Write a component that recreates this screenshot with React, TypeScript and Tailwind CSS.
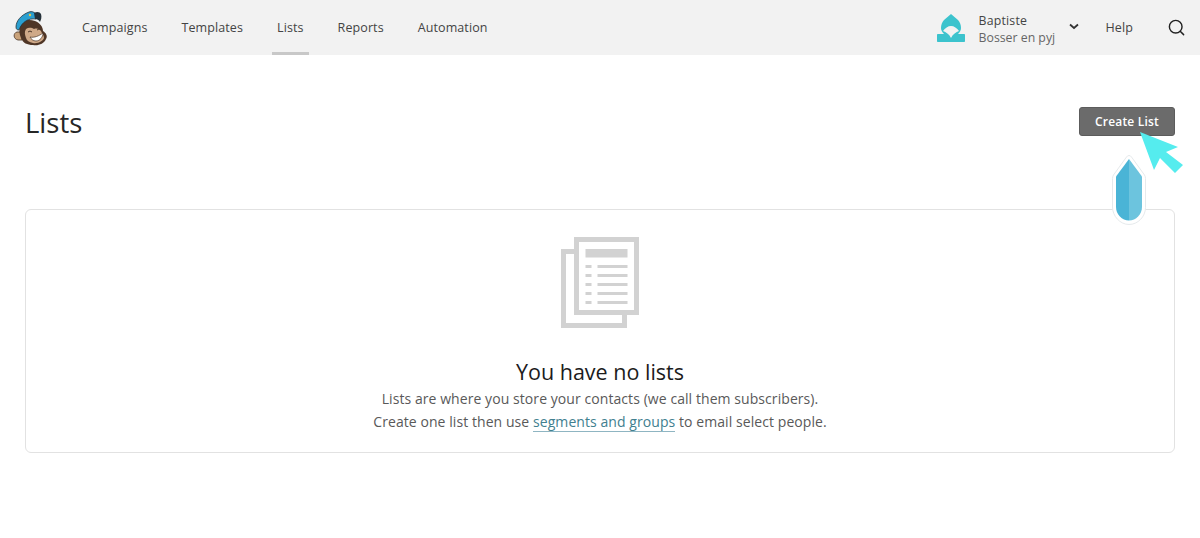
import { Search } from "lucide-react"

const navItems = ["Campaigns", "Templates", "Lists", "Reports", "Automation"]

function Logo() {
  return (
    <svg width="36" height="36" viewBox="0 0 36 36" className="shrink-0">
      <path d="M4 22c-4 1-4 7 1 8l4 0 0-8z" fill="#c9a27a" stroke="#4a3527" strokeWidth="0.8" />
      <path d="M7 15c2-5 9-6 15-4 5 2 8 6 8 10 3 2 5 5 3 8-2 5-8 7-13 6-6 0-10-2-12-7-2-4-2-9-1-13z" fill="#4f3626" />
      <path d="M13 19c3-2 6-1 8 0 3-1 6 0 7 2 1 3 3 4 3 7-1 3-6 6-11 5-4-1-6-2-7-5-1-3-2-6 0-9z" fill="#cfa988" />
      <path d="M17 27c4 1 9-1 13-4 0 4-3 8-7 8-3 0-5-2-6-4z" fill="#ffffff" stroke="#4a3527" strokeWidth="0.7" />
      <path d="M15 22q2-2 4 0M24 20q2-2 4 0" fill="none" stroke="#4a3527" strokeWidth="1" />
      <path d="M3 17C3 11 8 5 16 2c3-1 5 0 7 2l0 5C15 8 9 12 6 20 4 20 3 19 3 17z" fill="#2a9fd0" stroke="#26323a" strokeWidth="0.8" />
      <path d="M21 3c3-2 6-1 7 1 1 3 0 6-1 8-1-2-3-3-5-3z" fill="#26323a" />
      <circle cx="17" cy="5" r="1.2" fill="#e8c34a" />
    </svg>
  )
}

function HoodIcon() {
  return (
    <svg width="28" height="28" viewBox="0 0 28 28" className="shrink-0">
      <path
        d="M14 0l7 6c2 2 3 5 3 8 0 2-1 4-3 6h6c.6 0 1 .4 1 1v6c0 .6-.4 1-1 1H1c-.6 0-1-.4-1-1v-6c0-.6.4-1 1-1h6c-2-2-3-4-3-6 0-3 1-6 3-8z"
        fill="#3cc3cd"
      />
      <path d="M6 17c2-3 5-5 8-5s6 2 8 5c-3 1-6 3-8 7-2-4-5-6-8-7z" fill="#f2f2f2" />
    </svg>
  )
}

function ListsIcon() {
  return (
    <svg width="78" height="91" viewBox="0 0 78 91">
      <path d="M0 12h13v5H5v69h56v-8h5v13H0z" fill="#d2d2d2" />
      <path d="M13 0h65v78H13zM18 5v68h55V5z" fill="#d2d2d2" fillRule="evenodd" />
      <rect x="24.5" y="12" width="42" height="8.5" fill="#d2d2d2" />
      {[28, 37, 46, 55, 64].map((y) => (
        <g key={y} fill="#d2d2d2">
          <rect x="24.5" y={y} width="6" height="3" />
          <rect x="36.5" y={y} width="30" height="3" />
        </g>
      ))}
    </svg>
  )
}

export default function App() {
  return (
    <div className="relative min-h-[538px] bg-white font-['Open_Sans',sans-serif] overflow-hidden">
      <header className="flex h-[55px] items-center bg-[#f2f2f2] pl-[13px] pr-[14px]">
        <Logo />
        <nav className="ml-[28px] flex h-full gap-[24px]">
          {navItems.map((item) => (
            <a
              key={item}
              className={
                "flex h-full items-center border-b-[3px] px-[5px] pt-[5px] text-[12.5px] tracking-[0.1px] text-[#444] " +
                (item === "Lists" ? "border-[#c8c8c8]" : "border-transparent")
              }
            >
              {item}
            </a>
          ))}
        </nav>
        <div className="ml-auto flex items-center">
          <HoodIcon />
          <div className="ml-[14px] flex w-[76px] flex-col whitespace-nowrap pt-[2px] text-[12.3px] leading-[17px]">
            <span className="text-[#444] tracking-[0.2px]">Baptiste</span>
            <span className="text-[#666]">Bosser en pyj</span>
          </div>
          <svg width="10" height="7" viewBox="0 0 10 7" className="ml-[14px] -mt-[2px]">
            <path d="M1 1.5l4 3.5 4-3.5" fill="none" stroke="#333" strokeWidth="1.8" />
          </svg>
          <span className="ml-[27px] pt-[1px] text-[12.5px] tracking-[0.1px] text-[#444]">Help</span>
          <Search size={19} strokeWidth={1.8} className="ml-[34px] text-[#222]" />
        </div>
      </header>

      <main className="px-[25px]">
        <div className="flex items-start justify-between pt-[52px]">
          <h1 className="text-[27.5px] leading-[32px] text-[#262626]">Lists</h1>
          <button className="h-[29px] w-[96px] rounded-[3px] border border-[#5c5c5c] bg-[#6b6b6b] text-[12px] font-semibold tracking-[0.2px] text-white">
            Create List
          </button>
        </div>

        <section className="mt-[70px] flex h-[244px] flex-col items-center rounded-[6px] border border-[#e2e2e2] pt-[27px]">
          <ListsIcon />
          <h2 className="mt-[28px] text-[21.5px] leading-[32px] text-[#1c1c1c]">You have no lists</h2>
          <p className="-mt-[1px] text-center text-[14px] leading-[23px] tracking-[0.07px] text-[#595959]">
            Lists are where you store your contacts (we call them subscribers).
            <br />
            Create one list then use{" "}
            <a className="border-b border-[#8fb5c2] text-[#41808f]">segments and groups</a> to email select people.
          </p>
        </section>
      </main>

      {/* annotation overlays */}
      <svg width="46" height="42" viewBox="0 0 46 42" className="absolute left-[1139px] top-[132px]">
        <path d="M1 0l38 15-12 5 17 13-8 8-15-15-6 12z" fill="#55ecee" />
      </svg>
      <svg width="36" height="74" viewBox="0 0 36 74" className="absolute left-[1111px] top-[154px]">
        <path d="M18 1.500q1.500 0 2.500 1.500l13 18q1 1.500 1 3.500v29c0 9-7.500 17-16.500 17S1.500 62 1.500 53V24.500q0-2 1-3.500l13-18q1-1.500 2.500-1.500z" fill="#fff" stroke="#e6eaec" strokeWidth="1" />
        <path d="M18 5L5 22.500V53c0 7.500 6 13.500 13 13.500z" fill="#4ab4d6" />
        <path d="M18 5l13 17.500V53c0 7.500-6 13.500-13 13.500z" fill="#6cc4de" />
      </svg>
    </div>
  )
}
